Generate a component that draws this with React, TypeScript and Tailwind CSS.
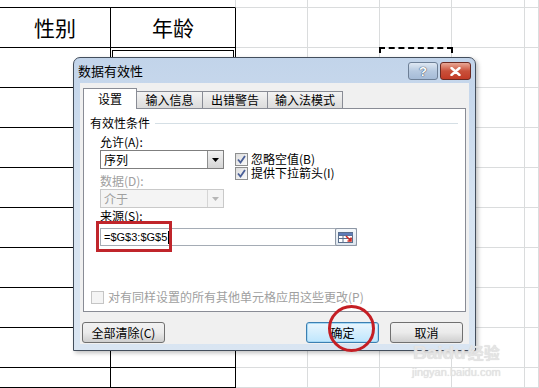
import React from "react";

const COLS = [111, 125, 72, 72, 72, 73, 14];
const ROWS = 11;

function Sheet() {
  const cells: React.ReactNode[] = [];
  for (let r = 0; r < ROWS; r++) {
    for (let c = 0; c < COLS.length; c++) {
      const dark = c < 2;
      let cls = "relative border-b ";
      if (r === 0) {
        cls += dark ? "border-black " : "border-[#dadcdd] ";
        cls += c === 0 ? "" : "border-r border-r-[#dadcdd] ";
      } else {
        cls += dark ? "border-r border-black " : "border-r border-[#dadcdd] ";
      }
      let content: React.ReactNode = null;
      if (r === 1 && c === 0) content = "性别";
      if (r === 1 && c === 1) content = "年龄";
      cells.push(
        <div key={`${r}-${c}`} className={cls + "flex items-center justify-center text-[21px] text-black"}>
          {content}
          {r === 2 && c === 1 && <div className="absolute inset-x-px top-[2px] bottom-0 border border-black" />}
          {r === 2 && c === 4 && (
            <div className="absolute -left-px -top-px right-[-2px] bottom-0 border-2 border-dashed border-black" />
          )}
        </div>
      );
    }
  }
  return (
    <div className="grid grid-cols-[111px_125px_72px_72px_72px_73px_14px] grid-rows-[8px_repeat(9,40px)_20px]">
      {cells}
    </div>
  );
}

function Check({ checked, disabled }: { checked?: boolean; disabled?: boolean }) {
  return (
    <span
      className={
        "flex h-[13px] w-[13px] shrink-0 items-center justify-center border " +
        (disabled ? "border-[#c5c5c5] bg-[#f4f4f4]" : "border-[#8e8f8f] bg-gradient-to-br from-[#dcdcdc] to-[#fbfbfb]")
      }
    >
      {checked && (
        <svg width="9" height="9" viewBox="0 0 9 9">
          <path d="M1 4.5 L3.5 7.5 L8 1" fill="none" stroke="#4a5f97" strokeWidth="1.8" />
        </svg>
      )}
    </span>
  );
}

function DropBtn({ disabled }: { disabled?: boolean }) {
  return (
    <span
      className={
        "flex h-full w-[16px] items-center justify-center border-l " +
        (disabled ? "border-[#d5d5d5] bg-[#f4f4f4]" : "border-[#8e8f8f] bg-gradient-to-b from-[#f2f2f2] to-[#d5d5d5]")
      }
    >
      <svg width="7" height="4" viewBox="0 0 7 4">
        <path d="M0 0 H7 L3.5 4 Z" fill={disabled ? "#b6b6b6" : "#000"} />
      </svg>
    </span>
  );
}

function Btn({ children, w, focus }: { children: React.ReactNode; w: string; focus?: boolean }) {
  return (
    <div
      className={
        "flex h-[21px] items-center justify-center rounded-[3px] border text-[12px] text-black " +
        w +
        (focus
          ? " border-[#3c7fb1] bg-gradient-to-b from-[#eaf6fd] to-[#bee6fd] shadow-[inset_0_0_0_1px_#a7d9f5]"
          : " border-[#707070] bg-gradient-to-b from-[#f2f2f2] via-[#ebebeb] to-[#cfcfcf]")
      }
    >
      {children}
    </div>
  );
}

export default function App() {
  return (
    <div
      className="relative h-[388px] w-[539px] overflow-hidden bg-white"
      style={{ fontFamily: '"Noto Sans CJK SC", "Liberation Sans", sans-serif' }}
    >
      <Sheet />

      {/* dialog */}
      <div className="absolute left-[73px] top-[57px] flex h-[294px] w-[403px] flex-col rounded-t-[7px] border border-[#434e5c] bg-gradient-to-b from-[#c2d4ea] via-[#d6e3f1] to-[#d9e5f2] shadow-[2px_2px_4px_rgba(0,0,0,0.25)]">
        <div className="flex h-[25px] items-center pl-[4px] pr-[4px]">
          <span className="text-[13px] leading-none text-black">数据有效性</span>
          <div className="ml-auto flex gap-[2px] self-start pt-[4px]">
            <div className="flex h-[18px] w-[30px] items-center justify-center rounded-[3px] border border-[#6d7f96] bg-gradient-to-b from-[#dfe8f3] via-[#b6c9e0] to-[#a5bbd7]">
              <span className="text-[13px] font-bold leading-none text-white [text-shadow:0_0_1px_#2e3f5c,0_0_1px_#2e3f5c]" style={{ fontFamily: '"Liberation Sans", sans-serif' }}>?</span>
            </div>
            <div className="flex h-[18px] w-[31px] items-center justify-center rounded-[3px] border border-[#6b2a22] bg-gradient-to-b from-[#e8a795] via-[#c9503a] to-[#c23b26]">
              <svg width="11" height="9" viewBox="0 0 11 9">
                <path d="M1.5 1 L9.5 8 M9.5 1 L1.5 8" stroke="#fff" strokeWidth="2.4" strokeLinecap="round" />
              </svg>
            </div>
          </div>
        </div>

        <div className="mx-[6px] mb-[6px] flex flex-1 flex-col bg-[#f0f0f0] px-[3px] pt-[5px]">
          {/* tabs */}
          <div className="relative z-10 flex h-[20px] items-end text-[12px] text-black">
            <div className="-mb-px flex h-[21px] w-[54px] items-center justify-center border border-b-0 border-[#898c95] bg-white">设置</div>
            <div className="-ml-px flex h-[17px] w-[67px] items-center justify-center border border-b-0 border-[#898c95] bg-gradient-to-b from-[#f3f3f3] to-[#dcdcdc]">输入信息</div>
            <div className="-ml-px flex h-[17px] w-[66px] items-center justify-center border border-b-0 border-[#898c95] bg-gradient-to-b from-[#f3f3f3] to-[#dcdcdc]">出错警告</div>
            <div className="-ml-px flex h-[17px] w-[76px] items-center justify-center border border-b-0 border-[#898c95] bg-gradient-to-b from-[#f3f3f3] to-[#dcdcdc]">输入法模式</div>
          </div>

          {/* panel */}
          <div className="flex h-[204px] w-[383px] flex-col border border-[#898c95] bg-white text-[12px] leading-[14px] text-black">
            <div className="mt-[7px] flex items-center pl-[6px] pr-[7px]">
              <span>有效性条件</span>
              <span className="ml-[5px] flex-1 border-t border-[#d5dfe5]" />
            </div>

            <div className="pl-[16px]">
              <div className="mt-[5px]">允许(A):</div>
              <div className="mt-px flex items-start">
                <div className="flex w-[124px] flex-col">
                  <div className="flex h-[19px] items-stretch border border-[#7f7f7f] bg-white">
                    <span className="flex flex-1 items-center pl-[3px]">序列</span>
                    <DropBtn />
                  </div>
                  <div className="mt-[5px] text-[#a0a0a0]">数据(D):</div>
                  <div className="mt-px flex h-[19px] items-stretch border border-[#c9c9c9] bg-[#f4f4f4]">
                    <span className="flex flex-1 items-center pl-[3px] text-[#a0a0a0]">介于</span>
                    <DropBtn disabled />
                  </div>
                </div>
                <div className="ml-[11px] mt-[2px] flex flex-col">
                  <div className="flex h-[14px] items-center">
                    <Check checked />
                    <span className="ml-[3px] leading-[12px]">忽略空值(B)</span>
                  </div>
                  <div className="flex h-[14px] items-center">
                    <Check checked />
                    <span className="ml-[3px] leading-[12px]">提供下拉箭头(I)</span>
                  </div>
                </div>
              </div>

              <div className="mt-px">来源(S):</div>
              <div className="mt-[5px] flex h-[18px] w-[257px] items-center border border-[#a5acb5] bg-white">
                <span
                  className="flex flex-1 items-center pl-[3px] text-[11px] leading-none text-black"
                  style={{ fontFamily: '"Liberation Sans", sans-serif' }}
                >
                  =$G$3:$G$5<span className="ml-px inline-block h-[13px] w-px bg-black" />
                </span>
                <div className="mr-[-1px] flex h-[18px] w-[22px] items-center justify-center rounded-[2px] border border-[#8d97a5] bg-gradient-to-b from-[#f5f8fb] to-[#dde5ee]">
                  <svg width="16" height="11" viewBox="0 0 16 11">
                    <rect x="0.5" y="0.5" width="14" height="10" fill="#fff" stroke="#5b6f8c" />
                    <path d="M0.5 3.5 H14.5 M0.5 6.5 H14.5 M5 0.5 V10.5" stroke="#5b6f8c" strokeWidth="1" />
                    <rect x="1" y="1" width="13.5" height="2.3" fill="#5f7cb8" />
                    <path d="M8 4 L13 9 M13 5.5 V9 H9.5" stroke="#d02a22" strokeWidth="1.6" fill="none" />
                  </svg>
                </div>
              </div>
            </div>

            <div className="mt-auto mb-[7px] flex items-center pl-[7px] text-[#a0a0a0]">
              <Check disabled />
              <span className="ml-[4px]">对有同样设置的所有其他单元格应用这些更改(P)</span>
            </div>
          </div>

          {/* buttons */}
          <div className="mt-[10px] flex pr-[3px]">
            <div className="-ml-px">
              <Btn w="w-[83px]">全部清除(C)</Btn>
            </div>
            <div className="ml-auto flex gap-[11px]">
              <Btn w="w-[73px]" focus>确定</Btn>
              <Btn w="w-[73px]">取消</Btn>
            </div>
          </div>
        </div>
      </div>

      {/* annotations */}
      <div className="absolute left-[96px] top-[221px] h-[31px] w-[76px] border-[3px] border-[#c0252b]" />
      <div className="absolute left-[328px] top-[305px] h-[47px] w-[47px] rounded-full border-[3px] border-[#c41e24]" />

      {/* watermark */}
      <div className="pointer-events-none absolute left-[412px] top-[343px] flex flex-col items-center text-[#e4e4e4] [text-shadow:0_0_1px_#d2d2d2]">
        <span className="text-[19px] font-bold leading-none" style={{ fontFamily: '"Liberation Sans", sans-serif' }}>
          Baidu<span className="ml-[2px] text-[16px]" style={{ fontFamily: '"Noto Sans CJK SC", sans-serif' }}>经验</span>
        </span>
        <span className="mt-[5px] text-[11px] leading-none" style={{ fontFamily: '"Liberation Sans", sans-serif' }}>jingyan.baidu.com</span>
      </div>
    </div>
  );
}
